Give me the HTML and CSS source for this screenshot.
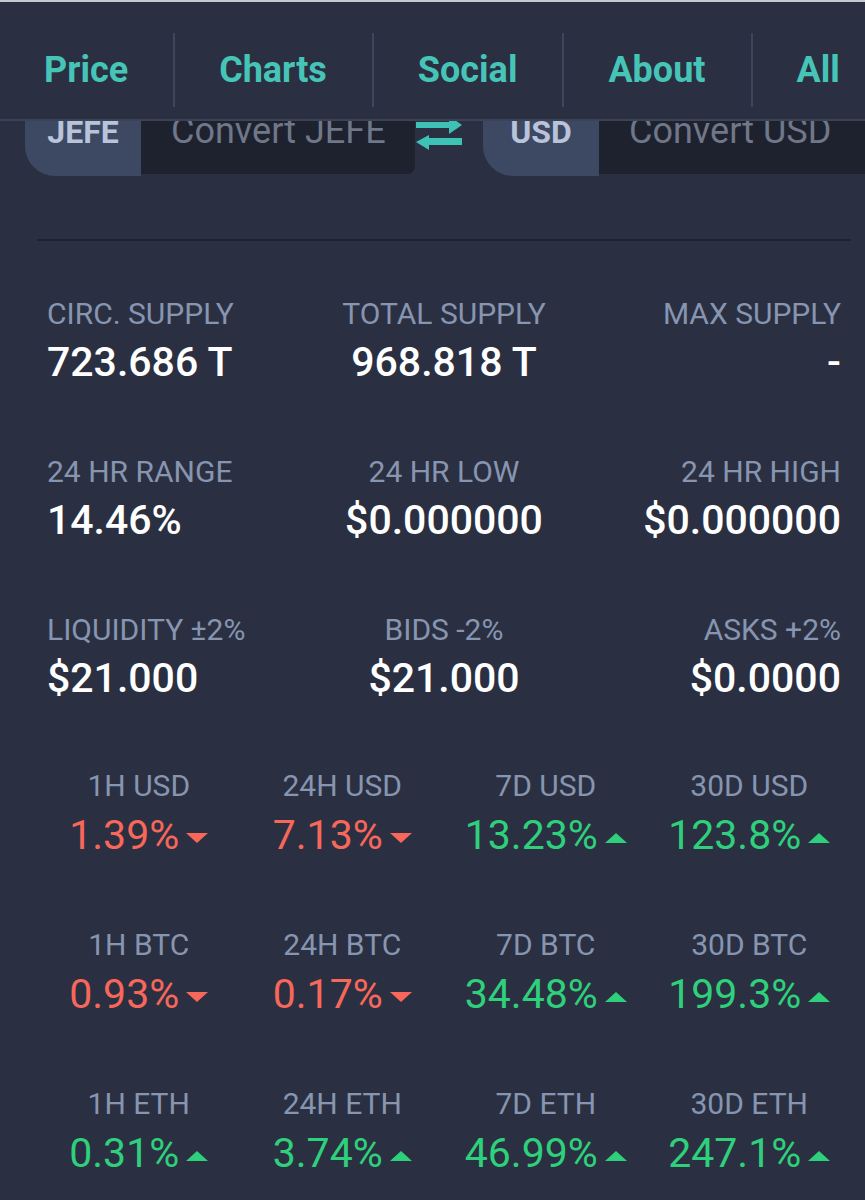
FILE: index.html
```html
<!DOCTYPE html>
<html lang="en">
<head>
    <meta charset="UTF-8">
    <meta name="viewport" content="width=device-width, initial-scale=1.0">
    <title>JEFE Price</title>
    <link rel="stylesheet" href="styles.css">
</head>
<body>
    <div class="status-line"></div>
    <header class="tabs">
        <a class="tab">Price</a>
        <a class="tab">Charts</a>
        <a class="tab">Social</a>
        <a class="tab">About</a>
        <a class="tab">All</a>
    </header>

    <section class="converter">
        <div class="conv-group">
            <span class="conv-badge">JEFE</span>
            <input class="conv-input" type="text" placeholder="Convert JEFE">
        </div>
        <svg class="swap" viewBox="0 0 46 40" width="46" height="40">
            <rect x="0" y="9" width="36" height="6"/>
            <polygon points="33,3 46,12 33,21"/>
            <rect x="10" y="25" width="36" height="7"/>
            <polygon points="13,22 0,29 13,37"/>
        </svg>
        <div class="conv-group conv-wide">
            <span class="conv-badge">USD</span>
            <input class="conv-input" type="text" placeholder="Convert USD">
        </div>
    </section>

    <main class="stats">
        <div class="divider"></div>

        <div class="supply-grid">
            <div class="stat">
                <div class="stat-label">CIRC. SUPPLY</div>
                <div class="stat-value">723.686 T</div>
            </div>
            <div class="stat">
                <div class="stat-label">TOTAL SUPPLY</div>
                <div class="stat-value">968.818 T</div>
            </div>
            <div class="stat">
                <div class="stat-label">MAX SUPPLY</div>
                <div class="stat-value">-</div>
            </div>

            <div class="stat">
                <div class="stat-label">24 HR RANGE</div>
                <div class="stat-value">14.46%</div>
            </div>
            <div class="stat">
                <div class="stat-label">24 HR LOW</div>
                <div class="stat-value">$0.000000</div>
            </div>
            <div class="stat">
                <div class="stat-label">24 HR HIGH</div>
                <div class="stat-value">$0.000000</div>
            </div>

            <div class="stat">
                <div class="stat-label">LIQUIDITY ±2%</div>
                <div class="stat-value">$21.000</div>
            </div>
            <div class="stat">
                <div class="stat-label">BIDS -2%</div>
                <div class="stat-value">$21.000</div>
            </div>
            <div class="stat">
                <div class="stat-label">ASKS +2%</div>
                <div class="stat-value">$0.0000</div>
            </div>
        </div>

        <div class="change-grid">
            <div class="change">
                <div class="change-label">1H USD</div>
                <div class="change-value down">1.39%<span class="arrow"></span></div>
            </div>
            <div class="change">
                <div class="change-label">24H USD</div>
                <div class="change-value down">7.13%<span class="arrow"></span></div>
            </div>
            <div class="change">
                <div class="change-label">7D USD</div>
                <div class="change-value up">13.23%<span class="arrow"></span></div>
            </div>
            <div class="change">
                <div class="change-label">30D USD</div>
                <div class="change-value up">123.8%<span class="arrow"></span></div>
            </div>

            <div class="change">
                <div class="change-label">1H BTC</div>
                <div class="change-value down">0.93%<span class="arrow"></span></div>
            </div>
            <div class="change">
                <div class="change-label">24H BTC</div>
                <div class="change-value down">0.17%<span class="arrow"></span></div>
            </div>
            <div class="change">
                <div class="change-label">7D BTC</div>
                <div class="change-value up">34.48%<span class="arrow"></span></div>
            </div>
            <div class="change">
                <div class="change-label">30D BTC</div>
                <div class="change-value up">199.3%<span class="arrow"></span></div>
            </div>

            <div class="change">
                <div class="change-label">1H ETH</div>
                <div class="change-value up">0.31%<span class="arrow"></span></div>
            </div>
            <div class="change">
                <div class="change-label">24H ETH</div>
                <div class="change-value up">3.74%<span class="arrow"></span></div>
            </div>
            <div class="change">
                <div class="change-label">7D ETH</div>
                <div class="change-value up">46.99%<span class="arrow"></span></div>
            </div>
            <div class="change">
                <div class="change-label">30D ETH</div>
                <div class="change-value up">247.1%<span class="arrow"></span></div>
            </div>
        </div>
    </main>
</body>
</html>
```

FILE: styles.css
```css
body {
    font-family: Roboto, "Liberation Sans", sans-serif;
    margin: 0;
    padding: 0;
    background-color: #2a3042;
    color: #ffffff;
    overflow-x: hidden;
}

.status-line {
    height: 2px;
    background-color: #c4c8d0;
}

/* tab bar sits on top of the converter row */
.tabs {
    position: relative;
    z-index: 2;
    display: flex;
    align-items: center;
    height: 86px;
    padding: 31px 0 0 0;
    background-color: #2a3042;
    border-bottom: 2px solid #3b4356;
    white-space: nowrap;
    overflow: hidden;
}
.tab {
    display: flex;
    align-items: center;
    height: 74px;
    padding: 0 45px 0 44px;
    font-size: 36px;
    font-weight: 700;
    color: #46c4b7;
    border-left: 2px solid #3e4659;
    margin-bottom: 12px;
}
.tab:first-child {
    border-left: none;
}

.converter {
    display: flex;
    align-items: center;
    height: 88px;
    margin-top: -33px;
    padding-left: 25px;
    overflow: hidden;
}
.conv-group {
    display: flex;
    align-items: flex-start;
    height: 88px;
    flex-shrink: 0;
}
.conv-badge {
    display: flex;
    align-items: center;
    justify-content: center;
    width: 116px;
    height: 88px;
    box-sizing: border-box;
    background-color: #3d4963;
    color: #b9c3da;
    font-size: 32px;
    font-weight: 700;
    border-radius: 0 0 0 30px;
}
.conv-input {
    width: 274px;
    height: 86px;
    box-sizing: border-box;
    padding: 0 0 0 30px;
    border: none;
    outline: none;
    background-color: #1e222e;
    color: #e0e0e0;
    font-family: Roboto, "Liberation Sans", sans-serif;
    font-size: 36px;
    border-radius: 0 0 8px 0;
}
.conv-input::placeholder {
    color: #6f7789;
}
.conv-wide .conv-input {
    width: 320px;
}
.swap {
    flex-shrink: 0;
    margin: 2px 21px 0 1px;
    fill: #3fc2b6;
}

.stats {
    width: 814px;
    margin-left: 37px;
}
.divider {
    height: 2px;
    margin-top: 63px;
    background-color: #1e2330;
}

.supply-grid {
    display: grid;
    grid-template-columns: 1fr 1fr 1fr;
    row-gap: 70px;
    padding: 57px 10px 0 10px;
}
.stat:nth-child(3n+2) {
    text-align: center;
}
.stat:nth-child(3n) {
    text-align: right;
}
.stat-label {
    font-size: 30px;
    line-height: 32px;
    color: #8795b0;
}
.stat-value {
    margin-top: 8px;
    font-size: 41px;
    line-height: 48px;
    font-weight: 500;
}

.change-grid {
    display: grid;
    grid-template-columns: repeat(4, 1fr);
    row-gap: 70px;
    margin-top: 68px;
    text-align: center;
}
.change-label {
    font-size: 30px;
    line-height: 32px;
    color: #8795b0;
}
.change-value {
    margin-top: 9px;
    font-size: 41px;
    line-height: 48px;
}
.change-value.down {
    color: #f7675a;
}
.change-value.up {
    color: #2fd07b;
}
.arrow {
    display: inline-block;
    width: 0;
    height: 0;
    margin-left: 7px;
    vertical-align: middle;
    border-left: 11px solid transparent;
    border-right: 11px solid transparent;
}
.down .arrow {
    border-top: 10px solid #f7675a;
}
.up .arrow {
    border-bottom: 10px solid #2fd07b;
}
```
